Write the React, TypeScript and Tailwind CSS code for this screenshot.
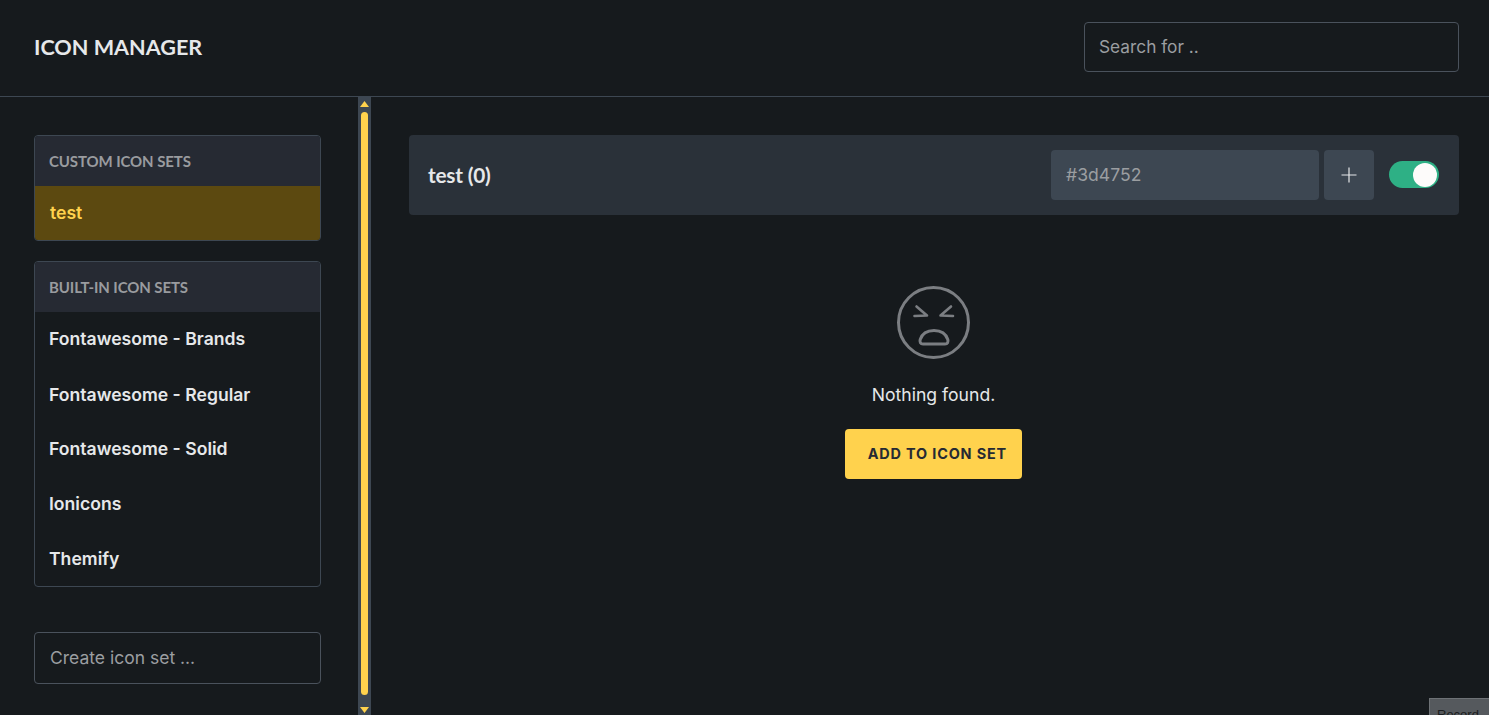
import React from "react";

const builtIn = [
	{ name: "Fontawesome - Brands", h: "h-[54px]" },
	{ name: "Fontawesome - Regular", h: "h-[57px] pt-[1px]" },
	{ name: "Fontawesome - Solid", h: "h-[53px]" },
	{ name: "Ionicons", h: "h-[56px]" },
	{ name: "Themify", h: "h-[54px]" },
];

const PanelHeader = ({ title }: { title: string }) => (
	<div className="flex h-[50px] items-center bg-[#262a33] px-[14px] font-['Lato',sans-serif] text-[15px] font-bold tracking-[-0.1px] text-[#999b9f]">
		{title}
	</div>
);

const Scrollbar = () => (
	<div className="flex h-full w-[13px] shrink-0 flex-col items-center bg-[#3d4752] pt-[4px] pb-[2px]">
		<svg width="9" height="6" viewBox="0 0 9 6" className="shrink-0">
			<path d="M4.5 0L9 6H0Z" fill="#ffd24d" />
		</svg>
		<div className="mt-[5px] w-[7px] flex-1 rounded-full bg-[#ffd24d]" />
		<svg width="9" height="6" viewBox="0 0 9 6" className="mt-[12px] shrink-0">
			<path d="M0 0H9L4.5 6Z" fill="#ffd24d" />
		</svg>
	</div>
);

const AngryFace = () => (
	<svg width="74" height="74" viewBox="0 0 74 74" fill="none" stroke="#7b7e82" strokeWidth="3">
		<circle cx="36.5" cy="36.5" r="35" />
		<path d="M17.5 30L30 29.5L19.5 20.5" strokeLinejoin="round" strokeLinecap="round" strokeWidth="2.6" />
		<path d="M56 30L43.5 29.5L54 20.5" strokeLinejoin="round" strokeLinecap="round" strokeWidth="2.6" />
		<path
			d="M26 58C23.5 58 22.5 56 23.2 53.5C25 48 30 44.5 37 44.5C44 44.5 49 48 50.8 53.5C51.5 56 50.5 58 48 58Z"
			strokeLinejoin="round"
		/>
	</svg>
);

export default function App() {
	return (
		<div className="relative flex h-[715px] w-full flex-col overflow-hidden bg-[#161a1d] font-['Inter',sans-serif] text-[#e6e8ea]">
			<header className="flex h-[97px] shrink-0 items-center justify-between border-b border-[#3d4752] pr-[30px] pb-[2px] pl-[34px]">
				<h1 className="font-['Lato',sans-serif] text-[21.6px] font-bold text-[#e6e8ea]">ICON MANAGER</h1>
				<div className="flex h-[50px] w-[375px] items-center rounded border border-[#4a525c] px-[14px] text-[17.3px] text-[#9b9ea1]">
					Search for ..
				</div>
			</header>

			<div className="flex min-h-0 flex-1">
				<aside className="flex w-[358px] shrink-0 flex-col px-[34px] pt-[38px]">
					<div className="w-[287px] overflow-hidden rounded border border-[#3d4752]">
						<PanelHeader title="CUSTOM ICON SETS" />
						<div className="flex h-[54px] items-center bg-[#5c4910] px-[15px] text-[17.6px] font-semibold text-[#ffd24d]">
							test
						</div>
					</div>

					<div className="mt-[20px] w-[287px] overflow-hidden rounded border border-[#3d4752]">
						<PanelHeader title="BUILT-IN ICON SETS" />
						{builtIn.map((item) => (
							<div
								key={item.name}
								className={`flex items-center px-[14px] text-[17.6px] font-semibold text-[#e6e8ea] ${item.h}`}
							>
								{item.name}
							</div>
						))}
					</div>

					<div className="mt-[45px] flex h-[52px] w-[287px] items-center rounded border border-[#4a525c] px-[15px] text-[17.5px] text-[#9b9ea1]">
						Create icon set ...
					</div>
				</aside>

				<Scrollbar />

				<main className="flex min-w-0 flex-1 flex-col pt-[38px] pr-[30px] pl-[38px]">
					<div className="flex h-[80px] items-center rounded bg-[#2a3139] pr-[20px] pl-[19px]">
						<span className="flex-1 font-['Lato',sans-serif] text-[20.8px] font-bold tracking-[-0.2px] text-[#e6e8ea]">
							test (0)
						</span>
						<div className="flex h-[50px] w-[268px] items-center rounded bg-[#3d4752] px-[15px] text-[17.6px] text-[#9b9ea1]">
							#3d4752
						</div>
						<button className="ml-[5px] flex h-[50px] w-[50px] items-center justify-center rounded bg-[#3d4752]">
							<svg width="16" height="16" viewBox="0 0 16 16" stroke="#e6e8ea" strokeWidth="1.2">
								<path d="M8 0.5V15.5M0.5 8H15.5" />
							</svg>
						</button>
						<div className="-mt-[1px] ml-[15px] flex h-[27px] w-[50px] items-center justify-end rounded-full bg-[#2eb085] pr-[2px]">
							<div className="h-[24px] w-[24px] rounded-full bg-[#fdfbfa]" />
						</div>
					</div>

					<div className="flex flex-col items-center pt-[71px] pr-[1px]">
						<AngryFace />
						<p className="mt-[23px] text-[17.6px] leading-[24px] text-[#e6e8ea]">Nothing found.</p>
						<button className="mt-[22px] flex h-[50px] w-[177px] items-center justify-end rounded bg-[#ffd24d] pr-[15px] text-[14.4px] font-bold tracking-[0.85px] text-[#262a33]">
							ADD TO ICON SET
						</button>
					</div>
				</main>
			</div>

			<div className="absolute top-[698px] right-0 h-[24px] w-[60px] border-t border-l border-[#6e7276] bg-[#55595d] pt-[8px] pl-[7px] font-['Liberation_Sans',sans-serif] text-[13px] leading-[15px] text-[#1b1d20]">
				Record
			</div>
		</div>
	);
}
